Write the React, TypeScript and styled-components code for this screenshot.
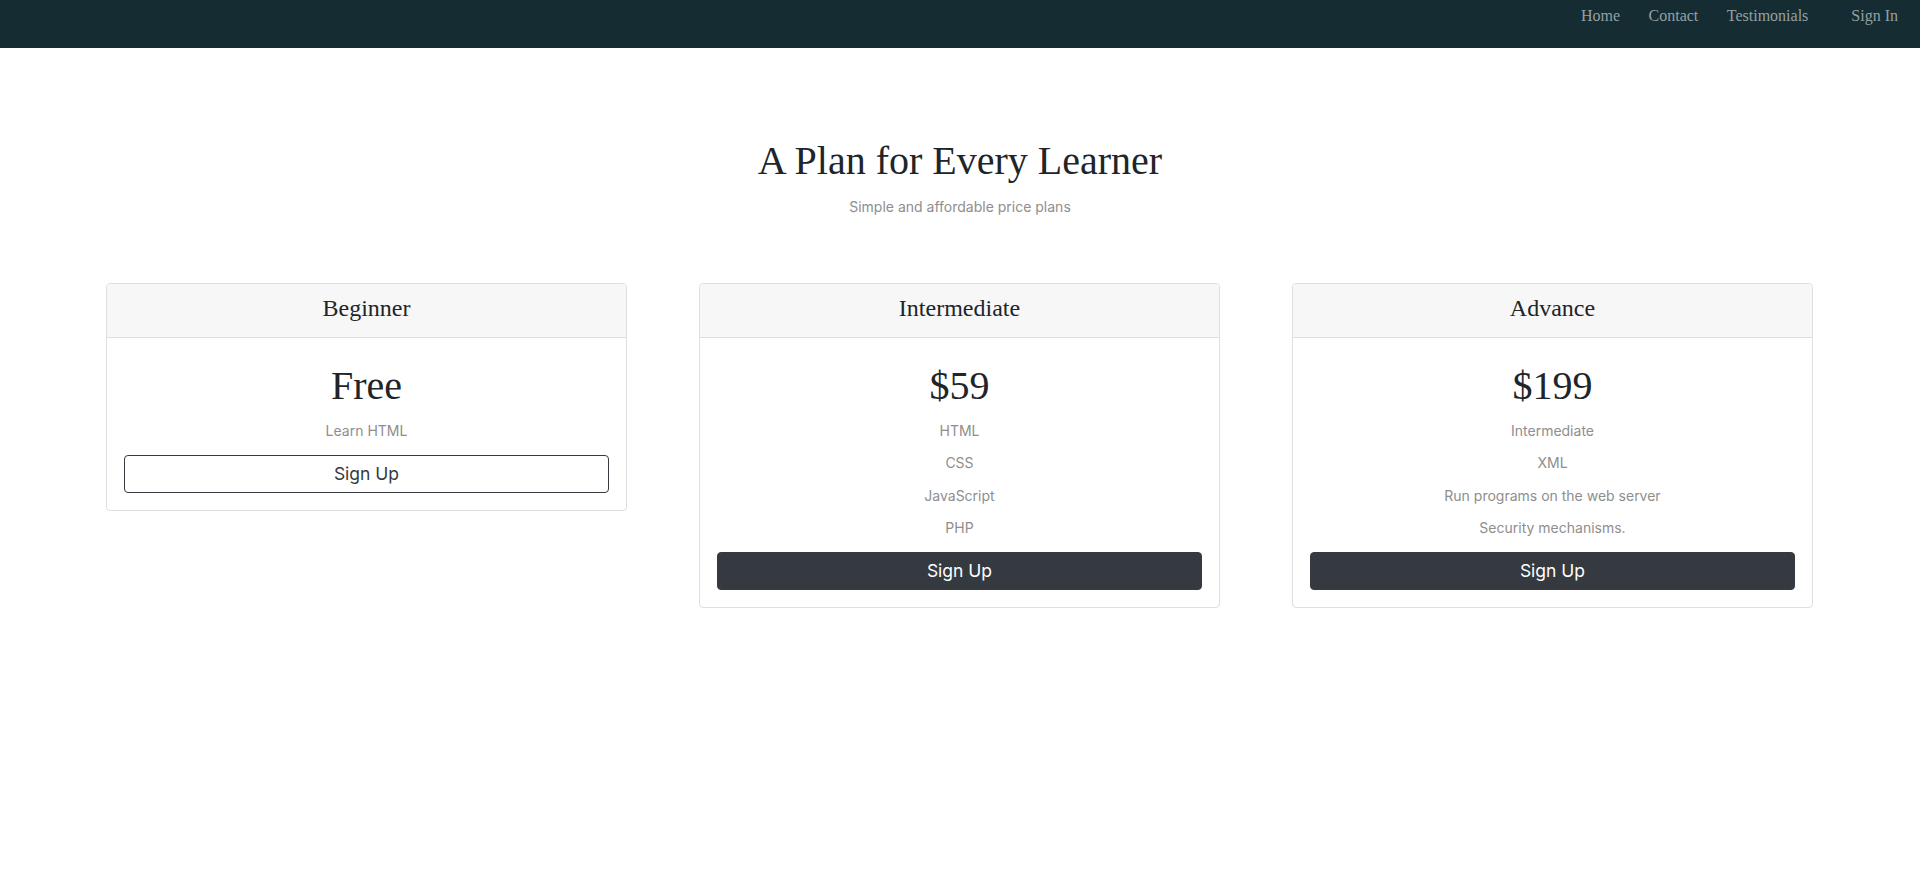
import React from "react";
import styled, { createGlobalStyle } from "styled-components";

const GlobalStyle = createGlobalStyle`
  html, body { margin: 0; padding: 0; background: #ffffff; }
  body {
    font-family: "Inter", "Open Sans", sans-serif;
    color: #212529;
  }
  * { box-sizing: border-box; }
`;

const NavBar = styled.nav`
  height: 48px;
  background: #142c32;
  display: flex;
  justify-content: flex-end;
  align-items: flex-start;
  padding: 4px 22px 0 0;
`;

const NavLinks = styled.ul`
  display: flex;
  gap: 28.5px;
  list-style: none;
  margin: 0;
  padding: 0;
`;

const NavLink = styled.a`
  font-family: "Liberation Serif", "Times New Roman", serif;
  font-size: 16px;
  line-height: 24px;
  color: #96a0a3;
  text-decoration: none;
`;

const SignInLink = styled(NavLink)`
  margin-left: 43px;
`;

const Hero = styled.header`
  text-align: center;
  padding-top: 89px;
`;

const Title = styled.h1`
  font-family: "Liberation Serif", "Times New Roman", serif;
  font-weight: 400;
  font-size: 40px;
  line-height: 48px;
  margin: 0;
  color: #212529;
`;

const Subtitle = styled.p`
  font-size: 14px;
  line-height: 20px;
  color: #8e8e8e;
  margin: 12px 0 0;
`;

const CardGrid = styled.section`
  display: grid;
  grid-template-columns: repeat(3, 521px);
  column-gap: 72px;
  align-items: start;
  padding: 66px 0 0 106px;
`;

const Card = styled.article`
  border: 1px solid #dfdfdf;
  border-radius: 4px;
  overflow: hidden;
  background: #fff;
`;

const CardHeader = styled.div`
  background: #f7f7f7;
  border-bottom: 1px solid #dfdfdf;
  padding: 10px 17px 14px;
  text-align: center;
`;

const PlanName = styled.h4`
  font-family: "Liberation Serif", "Times New Roman", serif;
  font-weight: 400;
  font-size: 24px;
  line-height: 29px;
  margin: 0;
  color: #212529;
`;

const CardBody = styled.div`
  padding: 24px 17px 17px;
  text-align: center;
`;

const Price = styled.h1`
  font-family: "Liberation Serif", "Times New Roman", serif;
  font-weight: 400;
  font-size: 40px;
  line-height: 48px;
  margin: 0 0 5px;
  color: #212529;
`;

const Features = styled.ul`
  list-style: none;
  margin: 0 0 8px;
  padding: 0;
`;

const Feature = styled.li`
  font-size: 14px;
  line-height: 32.3px;
  color: #8e8e8e;
`;

const Button = styled.button<{ $outline?: boolean }>`
  display: block;
  width: 100%;
  height: 38px;
  border-radius: 4px;
  border: 1px solid #343a40;
  background: ${(p) => (p.$outline ? "#ffffff" : "#343a40")};
  color: ${(p) => (p.$outline ? "#343a40" : "#ffffff")};
  font-family: "Inter", "Open Sans", sans-serif;
  font-size: 17.5px;
  line-height: 24px;
  cursor: pointer;
`;

type Plan = { name: string; price: string; features: string[]; outline?: boolean };

const plans: Plan[] = [
  { name: "Beginner", price: "Free", features: ["Learn HTML"], outline: true },
  { name: "Intermediate", price: "$59", features: ["HTML", "CSS", "JavaScript", "PHP"] },
  {
    name: "Advance",
    price: "$199",
    features: ["Intermediate", "XML", "Run programs on the web server", "Security mechanisms."],
  },
];

export default function App() {
  return (
    <>
      <GlobalStyle />
      <NavBar>
        <NavLinks>
          <li><NavLink href="#">Home</NavLink></li>
          <li><NavLink href="#">Contact</NavLink></li>
          <li><NavLink href="#">Testimonials</NavLink></li>
        </NavLinks>
        <SignInLink href="#">Sign In</SignInLink>
      </NavBar>
      <Hero>
        <Title>A Plan for Every Learner</Title>
        <Subtitle>Simple and affordable price plans</Subtitle>
      </Hero>
      <CardGrid>
        {plans.map((p) => (
          <Card key={p.name}>
            <CardHeader>
              <PlanName>{p.name}</PlanName>
            </CardHeader>
            <CardBody>
              <Price>{p.price}</Price>
              <Features>
                {p.features.map((f) => (
                  <Feature key={f}>{f}</Feature>
                ))}
              </Features>
              <Button $outline={p.outline}>Sign Up</Button>
            </CardBody>
          </Card>
        ))}
      </CardGrid>
    </>
  );
}
